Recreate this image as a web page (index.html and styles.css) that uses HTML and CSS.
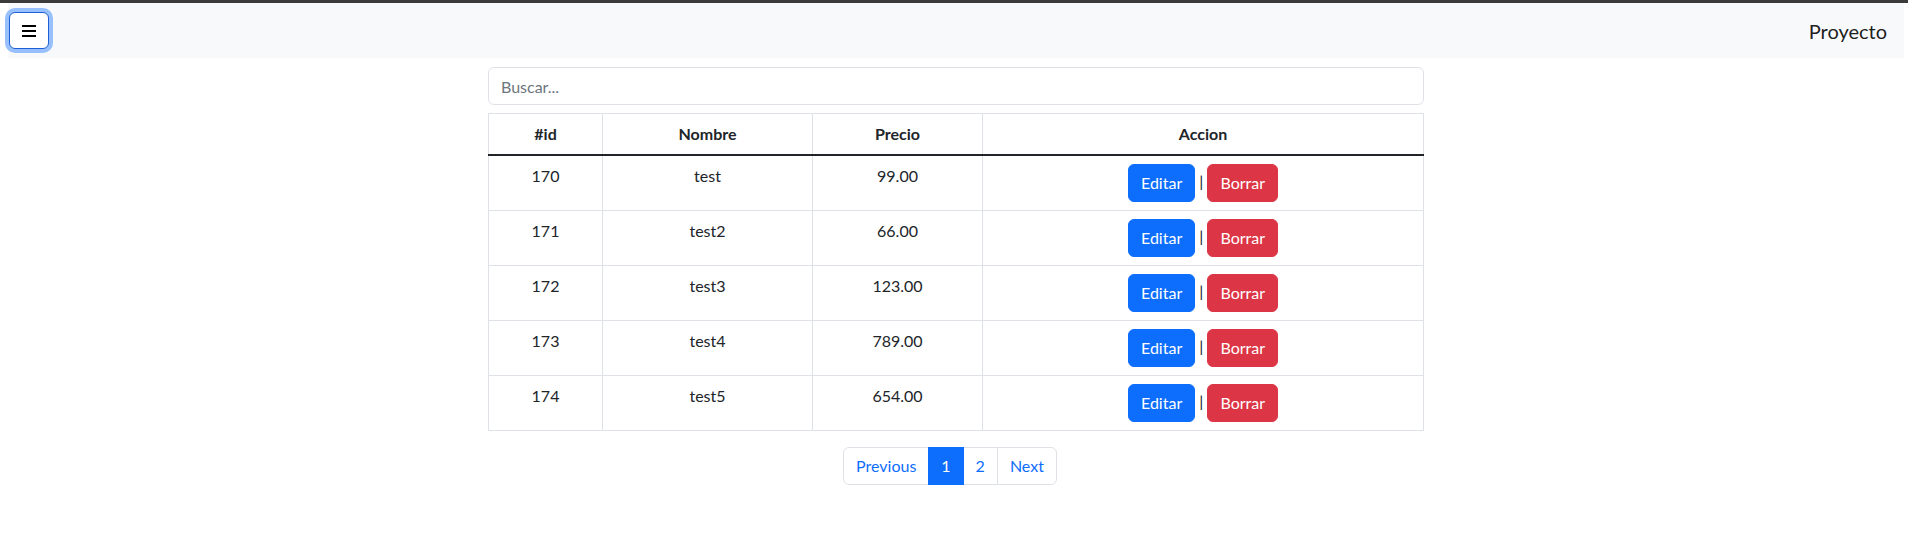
FILE: index.html
```html
<!DOCTYPE html>
<html lang="es">
<head>
<meta charset="utf-8">
<title>Proyecto</title>
<link rel="stylesheet" href="styles.css">
</head>
<body>
<div class="topbar"></div>
<div class="shell">
  <nav class="navbar">
    <button class="toggler" type="button" aria-label="Menu">
      <svg width="14" height="12" viewBox="0 0 14 12" aria-hidden="true"><rect x="0" y="0" width="14" height="2" fill="#000"/><rect x="0" y="5" width="14" height="2" fill="#000"/><rect x="0" y="10" width="14" height="2" fill="#000"/></svg>
    </button>
    <span class="brand">Proyecto</span>
  </nav>
  <main class="content">
    <input class="search" type="text" placeholder="Buscar...">
    <table class="grid">
      <thead>
        <tr><th class="c-id">#id</th><th class="c-name">Nombre</th><th class="c-price">Precio</th><th>Accion</th></tr>
      </thead>
      <tbody>
        <tr><td>170</td><td>test</td><td>99.00</td><td><a class="btn btn-edit">Editar</a> | <a class="btn btn-delete">Borrar</a></td></tr>
        <tr><td>171</td><td>test2</td><td>66.00</td><td><a class="btn btn-edit">Editar</a> | <a class="btn btn-delete">Borrar</a></td></tr>
        <tr><td>172</td><td>test3</td><td>123.00</td><td><a class="btn btn-edit">Editar</a> | <a class="btn btn-delete">Borrar</a></td></tr>
        <tr><td>173</td><td>test4</td><td>789.00</td><td><a class="btn btn-edit">Editar</a> | <a class="btn btn-delete">Borrar</a></td></tr>
        <tr><td>174</td><td>test5</td><td>654.00</td><td><a class="btn btn-edit">Editar</a> | <a class="btn btn-delete">Borrar</a></td></tr>
      </tbody>
    </table>
    <nav class="pager">
      <ul>
        <li><a class="page">Previous</a></li>
        <li><a class="page active">1</a></li>
        <li><a class="page">2</a></li>
        <li><a class="page">Next</a></li>
      </ul>
    </nav>
  </main>
</div>
</body>
</html>
```
FILE: styles.css
```css
body {
  margin: 0;
  font-family: "Lato", "Open Sans", sans-serif;
  font-size: 16px;
  line-height: 1.5;
  color: #212529;
  background: #fff;
}
.topbar {
  height: 3px;
  background: #3b3b3b;
}
.shell {
  padding: 0 4px 0 8px;
}
.navbar {
  display: flex;
  align-items: center;
  justify-content: space-between;
  height: 55px;
  background: #f8f9fa;
  padding: 0 17px 0 1px;
  box-sizing: border-box;
}
.toggler {
  width: 40px;
  height: 37px;
  box-sizing: border-box;
  border: 1px solid #1d5fd6;
  border-radius: 6px;
  background: #fff;
  box-shadow: 0 0 0 4px #98c0fd;
  display: flex;
  align-items: center;
  justify-content: center;
  padding: 0;
}
.brand {
  font-size: 20px;
  color: rgba(0, 0, 0, 0.9);
}
.content {
  width: 936px;
  margin: 9px auto 0;
}
.search {
  display: block;
  width: 100%;
  box-sizing: border-box;
  height: 38px;
  padding: 6px 12px;
  font: inherit;
  color: #212529;
  border: 1px solid #dee2e6;
  border-radius: 6px;
  outline: none;
}
.search::placeholder {
  color: #6c757d;
}
.grid {
  width: 100%;
  margin: 8px 0 16px;
  border-collapse: collapse;
  table-layout: fixed;
}
.grid th,
.grid td {
  box-sizing: border-box;
  border: 1px solid #dee2e6;
  padding: 8px;
  text-align: center;
  vertical-align: top;
}
.grid thead th {
  font-weight: 700;
  border-bottom: 2px solid #212529;
}
.c-id { width: 114px; }
.c-name { width: 210px; }
.c-price { width: 170px; }
.btn {
  display: inline-block;
  padding: 6px 12px;
  line-height: 1.5;
  border: 1px solid transparent;
  border-radius: 6px;
  color: #fff;
  vertical-align: middle;
  cursor: pointer;
}
.btn-edit { background: #0d6efd; border-color: #0d6efd; }
.btn-delete { background: #dc3545; border-color: #dc3545; }
.pager {
  margin-right: 12px;
}
.pager ul {
  display: flex;
  justify-content: center;
  list-style: none;
  margin: 0;
  padding: 0;
}
.page {
  display: block;
  padding: 6px 12px;
  border: 1px solid #dee2e6;
  margin-left: -1px;
  color: #0d6efd;
  background: #fff;
}
.pager li:first-child .page {
  margin-left: 0;
  border-radius: 6px 0 0 6px;
}
.pager li:last-child .page {
  border-radius: 0 6px 6px 0;
}
.page.active {
  background: #0d6efd;
  border-color: #0d6efd;
  color: #fff;
  position: relative;
}
```
